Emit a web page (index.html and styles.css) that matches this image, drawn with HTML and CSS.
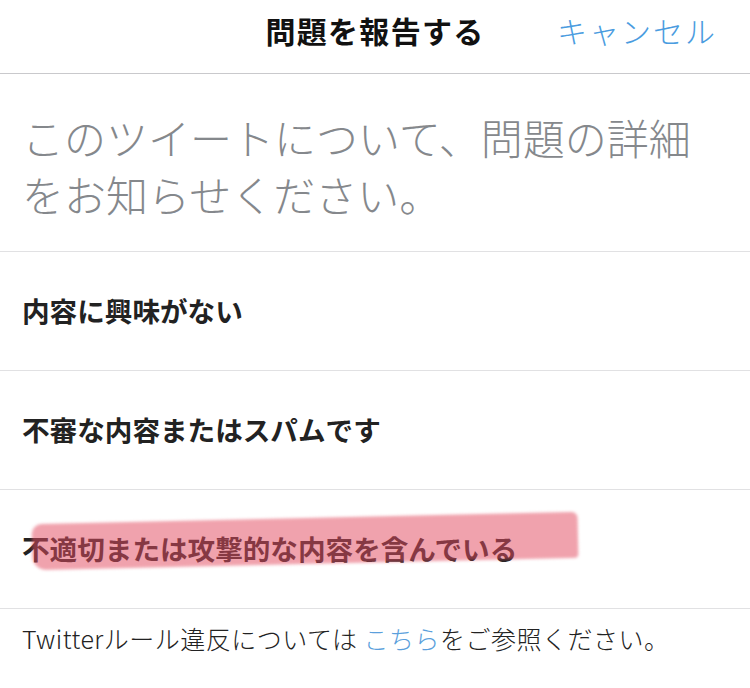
FILE: index.html
```html
<!DOCTYPE html>
<html lang="ja">
<head>
<meta charset="utf-8">
<link rel="stylesheet" href="styles.css">
</head>
<body>
<div class="screen">
  <header class="header">
    <span></span>
    <h1 class="title">問題を報告する</h1>
    <span class="cancel">キャンセル</span>
  </header>
  <section class="prompt">このツイートについて、問題の詳細をお知らせください。</section>
  <ul class="options">
    <li class="option">内容に興味がない</li>
    <li class="option">不審な内容またはスパムです</li>
    <li class="option marked">不適切または攻撃的な内容を含んでいる<span class="highlight"></span></li>
  </ul>
  <footer class="footer">Twitterルール違反については <span class="link">こちら</span>をご参照ください。</footer>
</div>
</body>
</html>
```
FILE: styles.css
```css
* { box-sizing: border-box; }
body {
  margin: 0;
  background: #ffffff;
  font-family: "Noto Sans CJK JP", "Noto Sans", sans-serif;
  color: #14171a;
}
.screen { width: 750px; height: 688px; overflow: hidden; }
.header {
  height: 74px;
  display: grid;
  grid-template-columns: 1fr auto 1fr;
  align-items: center;
  border-bottom: 1px solid #c9c9cc;
  padding-bottom: 14px;
}
.title {
  margin: 0;
  font-size: 30px;
  font-weight: 700;
  color: #111;
  letter-spacing: 1.3px;
}
.cancel {
  justify-self: end;
  padding-right: 33px;
  font-size: 30px;
  font-weight: 300;
  color: #4a9ce0;
  letter-spacing: 2px;
}
.prompt {
  height: 178px;
  padding: 34px 22px 0 22px;
  font-size: 42px;
  font-weight: 300;
  line-height: 57px;
  color: #85888c;
  border-bottom: 1px solid #e1e1e3;
}
.options { list-style: none; margin: 0; padding: 0; }
.option {
  position: relative;
  height: 119px;
  display: flex;
  align-items: center;
  padding: 0 22px 2px 22px;
  font-size: 27.6px;
  font-weight: 700;
  color: #222;
  border-bottom: 1px solid #e1e1e3;
}
.highlight {
  position: absolute;
  left: 32px;
  top: 28px;
  width: 546px;
  height: 46px;
  background: rgba(226, 76, 98, 0.52);
  border-radius: 10px 6px 4px 14px;
  transform: rotate(-1.3deg);
  filter: blur(1.6px);
  pointer-events: none;
}
.footer {
  padding: 13px 22px 0 22px;
  font-size: 25px;
  font-weight: 300;
  line-height: 32px;
  letter-spacing: 0.5px;
  color: #222;
}
.link { color: #5b9fdc; }
```
